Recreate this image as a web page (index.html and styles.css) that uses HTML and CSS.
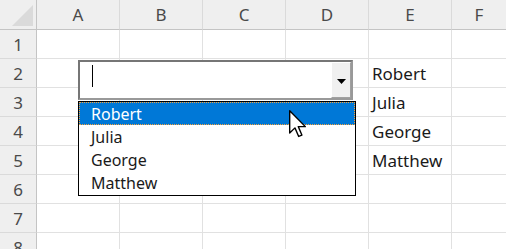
FILE: index.html
```html
<!DOCTYPE html>
<html>
<head>
<meta charset="utf-8">
<link rel="stylesheet" href="styles.css">
</head>
<body>
<div class="sheet">
  <div class="grid">
    <div class="corner"><span class="tri"></span></div>
    <div class="colhead">A</div>
    <div class="colhead">B</div>
    <div class="colhead">C</div>
    <div class="colhead">D</div>
    <div class="colhead">E</div>
    <div class="colhead last">F</div>

    <div class="rowhead">1</div><div class="cell"></div><div class="cell"></div><div class="cell"></div><div class="cell"></div><div class="cell"></div><div class="cell last"></div>
    <div class="rowhead">2</div><div class="cell"></div><div class="cell"></div><div class="cell"></div><div class="cell"></div><div class="cell txt">Robert</div><div class="cell last"></div>
    <div class="rowhead">3</div><div class="cell"></div><div class="cell"></div><div class="cell"></div><div class="cell"></div><div class="cell txt">Julia</div><div class="cell last"></div>
    <div class="rowhead">4</div><div class="cell"></div><div class="cell"></div><div class="cell"></div><div class="cell"></div><div class="cell txt">George</div><div class="cell last"></div>
    <div class="rowhead">5</div><div class="cell"></div><div class="cell"></div><div class="cell"></div><div class="cell"></div><div class="cell txt">Matthew</div><div class="cell last"></div>
    <div class="rowhead">6</div><div class="cell"></div><div class="cell"></div><div class="cell"></div><div class="cell"></div><div class="cell"></div><div class="cell last"></div>
    <div class="rowhead">7</div><div class="cell"></div><div class="cell"></div><div class="cell"></div><div class="cell"></div><div class="cell"></div><div class="cell last"></div>
    <div class="rowhead">8</div><div class="cell"></div><div class="cell"></div><div class="cell"></div><div class="cell"></div><div class="cell"></div><div class="cell last"></div>
  </div>

  <div class="combo">
    <div class="combo-input"><span class="caret"></span></div>
    <div class="combo-btn">
      <svg width="9" height="5" viewBox="0 0 9 5"><path d="M0 0H9L4.5 5Z" fill="#000"/></svg>
    </div>
  </div>

  <ul class="list">
    <li class="item selected">Robert</li>
    <li class="item">Julia</li>
    <li class="item">George</li>
    <li class="item">Matthew</li>
  </ul>

  <svg class="pointer" width="18" height="28" viewBox="0 0 13 20">
    <path d="M0.5 0.5 L0.5 16.5 L4.3 12.8 L7 19 L9.3 18 L6.7 11.9 L11.8 11.9 Z" fill="#fff" stroke="#000" stroke-width="1" stroke-linejoin="round"/>
  </svg>
</div>
</body>
</html>
```

FILE: styles.css
```css
html, body {
  margin: 0;
  padding: 0;
  background: #fff;
}

.sheet {
  position: relative;
  width: 506px;
  height: 249px;
  overflow: hidden;
  font-family: "Noto Sans", "Liberation Sans", sans-serif;
}

.grid {
  display: grid;
  grid-template-columns: 37px repeat(5, 83px) 1fr;
  grid-template-rows: 30px repeat(8, 29px);
}

.corner,
.colhead,
.rowhead {
  background: #efefef;
  color: #4a4a4a;
  box-sizing: border-box;
  display: flex;
  align-items: center;
  justify-content: center;
  font-size: 17px;
}

.corner {
  position: relative;
  border-right: 1px solid #c4c4c4;
  border-bottom: 1px solid #c4c4c4;
}

.tri {
  position: absolute;
  left: 12px;
  top: 5px;
  width: 0;
  height: 0;
  border-left: 21px solid transparent;
  border-bottom: 21px solid #dadada;
}

.colhead {
  border-right: 1px solid #dadada;
  border-bottom: 1px solid #c4c4c4;
}

.colhead.last { border-right: none; }

.rowhead {
  border-right: 1px solid #c4c4c4;
  border-bottom: 1px solid #dadada;
  padding-top: 1px;
}

.cell {
  box-sizing: border-box;
  border-right: 1px solid #e1e1e1;
  border-bottom: 1px solid #e1e1e1;
}

.cell.last { border-right: none; }

.cell.txt {
  font-size: 17px;
  color: #1a1a1a;
  padding-left: 3px;
  display: flex;
  align-items: center;
}

.combo {
  position: absolute;
  left: 78px;
  top: 60px;
  width: 275px;
  height: 40px;
  box-sizing: border-box;
  border: 2px solid #767676;
  border-right-color: #999;
  border-bottom-color: #999;
  background: #fff;
  display: flex;
}

.combo-input {
  flex: 1;
  position: relative;
}

.caret {
  position: absolute;
  left: 12px;
  top: 3px;
  width: 1px;
  height: 22px;
  background: #000;
}

.combo-btn {
  width: 20px;
  box-sizing: border-box;
  background: #f0f0f0;
  border-left: 1px solid #fff;
  border-top: 1px solid #fff;
  border-right: 1px solid #a0a0a0;
  border-bottom: 1px solid #a0a0a0;
  display: flex;
  align-items: center;
  justify-content: center;
  padding-top: 2px;
}

.list {
  position: absolute;
  left: 78px;
  top: 101px;
  width: 278px;
  height: 95px;
  box-sizing: border-box;
  margin: 0;
  padding: 0;
  list-style: none;
  border: 1px solid #000;
  background: #fff;
}

.item {
  height: 23px;
  box-sizing: border-box;
  padding-left: 12px;
  padding-top: 1px;
  font-size: 16px;
  color: #1a1a1a;
  display: flex;
  align-items: center;
}

.item.selected {
  background: #0078d7;
  color: #fff;
  outline: 1px dotted #f7a23a;
  outline-offset: -1px;
}

.pointer {
  position: absolute;
  left: 289px;
  top: 110px;
}
```
